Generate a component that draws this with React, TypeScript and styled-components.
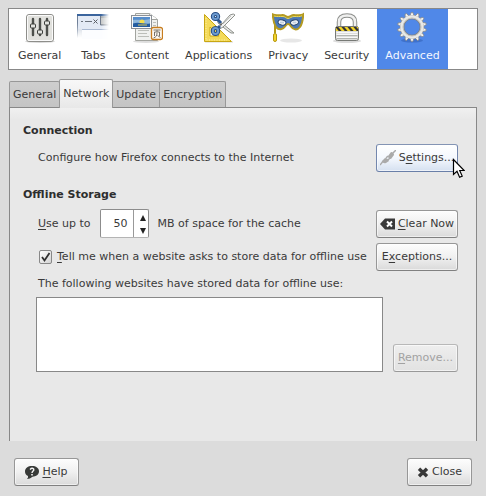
import React, { useState } from "react";
import styled, { createGlobalStyle, css } from "styled-components";

const GlobalStyle = createGlobalStyle`
  *, *::before, *::after { box-sizing: border-box; }
  html { height: 100%; }
  body {
    margin: 0;
    background: #dcdcdc;
    color: #3a3a3a;
    font: 11px/16px "DejaVu Sans", Verdana, sans-serif;
  }
  button, input, select { font: inherit; color: inherit; margin: 0; }
  svg { display: block; flex: none; }
  u { text-underline-offset: 2px; text-decoration-thickness: 1px; text-decoration-skip-ink: none; }
`;

const Dialog = styled.main`
  display: flex;
  flex-direction: column;
  min-height: 100vh;
  padding: 8px 8px 10px;
`;

const CategoryBar = styled.nav`
  display: flex;
  height: 62px;
  padding-left: 1px;
  border: 1px solid #888888;
  background: #ffffff;
`;

const Category = styled.button<{ $active: boolean }>`
  display: flex;
  flex-direction: column;
  align-items: center;
  gap: 5px;
  padding: 2px 8px 0;
  border: 0;
  background: ${(p) => (p.$active ? "#5088e8" : "transparent")};
  ${(p) => p.$active && css`color: #f4f7ff;`}
`;

const TabList = styled.div`
  display: flex;
  align-items: flex-end;
  height: 29px;
  margin: 9px 1px 0;
`;

const Tab = styled.button<{ $active: boolean }>`
  height: ${(p) => (p.$active ? 29 : 27)}px;
  padding: 0 3px;
  border: 1px solid #989898;
  border-bottom: ${(p) => (p.$active ? "0" : "1px solid #888888")};
  border-radius: 2px 2px 0 0;
  background: ${(p) => (p.$active ? "linear-gradient(#f8f8f8, #e8e8e8)" : "linear-gradient(#cecece, #c4c4c4)")};
  & + & { margin-left: -1px; }
  ${(p) => p.$active && css`
    position: relative;
    z-index: 1;
  `}
`;

const Panel = styled.section`
  flex: 1;
  display: flex;
  flex-direction: column;
  margin: -1px 1px 0;
  padding: 15px 18px 0 13px;
  border: 1px solid #888888;
  border-bottom: 0;
  background: linear-gradient(#f0f0f0, #e8e8e8 12px);
`;

const Heading = styled.h2`
  margin: 0;
  font-size: 11px;
  line-height: 16px;
  color: #2e2e2e;
  & + div { margin-top: 5px; }
  div + & { margin-top: 15px; }
`;

const Row = styled.div`
  display: flex;
  align-items: center;
  justify-content: space-between;
  min-height: 28px;
  padding-left: 15px;
`;

const StorageRows = styled.div`
  display: flex;
  flex-direction: column;
  gap: 5px;
  padding-top: 1px;
`;

const CacheField = styled.div`
  display: flex;
  align-items: center;
  gap: 9px;
`;

const SpinBox = styled.div`
  display: flex;
  width: 49px;
  height: 29px;
  border: 1px solid #8c8c8c;
  border-bottom-color: #b4b4b4;
  border-radius: 2px;
  background: #ffffff;
`;

const SpinInput = styled.input`
  flex: 1;
  min-width: 0;
  padding: 0 5px 0 0;
  border: 0;
  background: transparent;
  text-align: right;
  appearance: textfield;
  outline: 0;
  &::-webkit-inner-spin-button { appearance: none; margin: 0; }
`;

const SpinButtons = styled.div`
  display: flex;
  flex-direction: column;
  width: 15px;
  border-left: 1px solid #999999;
`;

const SpinButton = styled.button`
  flex: 1;
  display: flex;
  align-items: center;
  justify-content: center;
  padding: 2px 0 0 4px;
  border: 0;
  background: transparent;
`;

const CheckLabel = styled.label`
  display: flex;
  align-items: center;
  gap: 5px;
`;

const CheckFrame = styled.span`
  display: grid;
  margin-left: 1px;
  & > * { grid-area: 1 / 1; }
  svg { pointer-events: none; }
`;

const CheckInput = styled.input`
  appearance: none;
  width: 13px;
  height: 14px;
  border: 1px solid #888888;
  border-radius: 2px;
  background: linear-gradient(135deg, #ffffff, #d4d4d4);
  & + svg { visibility: hidden; }
  &:checked + svg { visibility: visible; }
`;

const SiteLabel = styled.label`
  display: block;
  margin-top: 5px;
  padding-left: 15px;
`;

const SiteArea = styled.div`
  display: flex;
  align-items: flex-end;
  gap: 10px;
  margin-top: 5px;
  padding-left: 13px;
`;

const SiteList = styled.select`
  flex: 1;
  min-width: 0;
  height: 75px;
  border: 1px solid #888888;
  border-radius: 0;
  background: #ffffff;
  outline: 0;
`;

const PushButton = styled.button<{ $tone?: "plain" | "hover"; $width: number }>`
  position: relative;
  display: flex;
  align-items: center;
  justify-content: center;
  gap: 3px;
  width: ${(p) => p.$width}px;
  height: 28px;
  padding: 0;
  white-space: nowrap;
  border: 1px solid #979797;
  border-bottom-color: #808080;
  border-radius: 3px;
  background: linear-gradient(#fdfdfd, #f0f0f0 50%, #dadada);
  box-shadow: inset 0 0 0 1px #ffffff90;
  ${(p) => p.$tone === "hover" && css`
    border-color: #8394b4 #7387ae #6a7fa8;
    background: linear-gradient(#ffffff, #f4f8fe 50%, #d5e0f0);
  `}
  &:disabled {
    color: #a2a2a2;
    border-color: #b8b8b8 #b0b0b0 #999999;
    background: linear-gradient(#eeeeee, #e2e2e2);
  }
`;

const Pointer = styled.svg`
  position: absolute;
  right: -8px;
  bottom: -8px;
  pointer-events: none;
`;

const Footer = styled.footer`
  display: flex;
  justify-content: space-between;
  margin-top: 17px;
  padding: 0 6px;
`;

const SlidersIcon = () => (
  <svg width="32" height="32" viewBox="0 0 32 32">
    <ellipse cx="16" cy="30.500" rx="15" ry="1.500" fill="#00000028" />
    <rect x="2.5" y="3.5" width="27" height="27" rx="2.5" fill="#e1e1dd" stroke="#8e8e8a" />
    <rect x="3.5" y="4.5" width="25" height="25" rx="1.5" fill="none" stroke="#fafafa" />
    <path d="M9 8v16M16 8v16M23 8v16" stroke="#4d4f4b" strokeWidth="2.4" strokeLinecap="round" />
    <g fill="#e2e3df" stroke="#3c3e3b">
      <rect x="6.5" y="13" width="5" height="4" rx="1" />
      <rect x="13.5" y="19" width="5" height="4" rx="1" />
      <rect x="20.5" y="10" width="5" height="4" rx="1" />
    </g>
  </svg>
);

const TabsIcon = () => (
  <svg width="32" height="32" viewBox="0 0 32 32">
    <defs>
      <linearGradient id="tabsSide" x2="1" y2="0"><stop offset=".75" stopColor="#fff" /><stop offset="1" stopColor="#fff" stopOpacity="0" /></linearGradient>
      <mask id="tabsMask"><rect width="32" height="28" y="2" fill="url(#tabsSide)" /></mask>
      <linearGradient id="tabsBody" x2="0" y2="1"><stop offset=".4" stopColor="#c3cddc" /><stop offset="1" stopColor="#d8dde4" stopOpacity="0" /></linearGradient>
      <linearGradient id="tabsEdge" x2="0" y2="1"><stop offset=".3" stopColor="#6f7f96" /><stop offset="1" stopColor="#6f7f96" stopOpacity="0" /></linearGradient>
    </defs>
    <g mask="url(#tabsMask)">
      <path d="M0 4h32v23H0z" fill="url(#tabsBody)" />
      <path d="M23 6h9v8h-9z" fill="#c5c8c8" stroke="#858b8d" />
      <path d="M1 4h22v10h9v4H1z" fill="#e3eaf5" />
      <path d="M0 5h1v22H0z" fill="url(#tabsEdge)" />
      <path d="M23.500 5v9H32" fill="none" stroke="#707b8b" />
      <path d="M0 3h32v2H0z" fill="#3a649d" />
      <path d="M5 18h27v10H5z" fill="#fcfdff" />
      <path d="M5 18.500h27" stroke="#a9b9d2" />
      <path d="M4 10.500h2M8 10.500h7" stroke="#6b727c" />
      <path d="m16.500 8.500 4 4m0-4-4 4" stroke="#5b6067" />
    </g>
  </svg>
);

const ContentIcon = () => (
  <svg width="32" height="32" viewBox="0 0 32 32">
    <ellipse cx="15" cy="30.500" rx="13" ry="1.500" fill="#00000022" />
    <path d="M4.500 2.500h14l8 6v21h-22z" fill="#f0f1ef" stroke="#a2a49f" />
    <path d="m18.500 2.500 1 6h7" fill="#fff" stroke="#a2a49f" />
    <path d="M7 19.500h11M7 22.500h9M7 25.500h11M22 11.500h3M22 14.500h3" stroke="#bcbeb9" />
    <rect x=".5" y="4.500" width="20" height="13" fill="#fafafa" stroke="#8c9197" />
    <path d="M2 6h17v6H2z" fill="#568dcb" />
    <path d="M2 9c5-1 9 1 17-1v5H2z" fill="#91b9dc" />
    <circle cx="11" cy="11" r="2.500" fill="#f6df4c" />
    <path d="M2 12.500c6-2 10 1 17 0V16H2z" fill="#245da0" />
    <path d="M7 14h9" stroke="#d8c860" />
    <rect x="20.500" y="16.500" width="11" height="12" rx="2" fill="#fffaf1" stroke="#c77d1f" strokeWidth="1.300" />
    <path d="M22.500 19h7M26 19v2M23.500 25v-4h5v4M26 22c0 3-1 4-3.500 5M26.500 24.500l3 2" stroke="#77726b" fill="none" />
  </svg>
);

const ApplicationsIcon = () => (
  <svg width="32" height="32" viewBox="0 0 32 32">
    <path d="M2 31h28" stroke="#00000028" />
    <path d="M1.500 3.500v27h27zM7 16v9h9z" fill="#f4da59" stroke="#c8a613" fillRule="evenodd" strokeLinejoin="round" />
    <path d="M3 7v22h21" fill="none" stroke="#fff2a8" strokeDasharray="1 1.500" />
    <path d="m15 10 5 3 11 9q-3 1-6-2l-10-8z" fill="#e8e9e7" stroke="#8d908b" />
    <path d="m14 17 5-4 8-9q4-2 5 0L20 16l-5 3z" fill="#f4f4f3" stroke="#8d908b" />
    <path d="m20 13 8-8" stroke="#c3c5c1" />
    <path d="m14 8 4 4m-4 6 3-3" stroke="#2d5792" strokeWidth="3" />
    <g fill="none" stroke="#244b82" strokeWidth="4"><ellipse cx="12.500" cy="5.500" rx="2.700" ry="2.500" /><ellipse cx="12.500" cy="20" rx="2.700" ry="3" /></g>
    <g fill="none" stroke="#6d9bd0" strokeWidth="2"><ellipse cx="12.500" cy="5.500" rx="2.700" ry="2.500" /><ellipse cx="12.500" cy="20" rx="2.700" ry="3" /></g>
    <circle cx="18" cy="13.500" r="1" fill="#666" />
  </svg>
);

const MaskIcon = () => (
  <svg width="32" height="32" viewBox="0 0 32 32">
    <ellipse cx="19" cy="29.500" rx="11" ry="2" fill="#00000018" />
    <path d="M3 14v8" stroke="#b59a15" strokeWidth="2" />
    <rect x="1.500" y="22.500" width="3" height="8" rx="1.500" fill="#f2d52c" stroke="#b79712" />
    <path d="M.8 3.500c3 1.500 6 .5 9 .5 3-.5 4 2 6.200 2s3.500-2.500 6.500-2c3 0 6 1 8.700-.7-.2 5-1.200 10-3.200 12.700-3 4-7 2.500-9-.5-1-2-2-2.500-3-2.500s-2 1-3 2.500c-2 3-6 4-9 .5C2 13 1 8 .8 3.500z" fill="#4c79b6" stroke="#b49a21" strokeWidth="2" />
    <path d="M2 5c3 1 6 .3 9 .5 2 0 3 2 5 2s3.500-2 6-2c3 0 6 .5 8-.7" fill="none" stroke="#efd94e" />
    <g fill="#fff" stroke="#29466f"><ellipse cx="10" cy="11.500" rx="4" ry="2.500" transform="rotate(12 10 11.500)" /><ellipse cx="22.500" cy="11.500" rx="4" ry="2.500" transform="rotate(-12 22.500 11.500)" /></g>
    <path d="M8 11.500h4m8.500 0h4" stroke="#c1cfdf" strokeWidth="2" />
  </svg>
);

const PadlockIcon = () => (
  <svg width="32" height="32" viewBox="0 0 32 32">
    <defs><clipPath id="lockBand"><path d="M5 16h22v4H5z" /></clipPath></defs>
    <ellipse cx="16" cy="30" rx="14" ry="2" fill="#00000024" />
    <path d="M8 17V11C8 6 11 4.500 16 4.500S24 6 24 11v6" fill="none" stroke="#8c8e8b" strokeWidth="4.500" />
    <path d="M8 17V11C8 6 11 4.500 16 4.500S24 6 24 11v6" fill="none" stroke="#f0f0ef" strokeWidth="2.500" />
    <rect x="4.500" y="15.500" width="23" height="14" rx="2" fill="#dededc" stroke="#777975" />
    <path d="M5.500 21.500h21M5.500 23.500h21M5.500 26.500h21" stroke="#f8f8f8" />
    <path d="M5.500 24.500h21M5.500 27.500h21" stroke="#b2b4b0" />
    <g clipPath="url(#lockBand)"><path d="M5 16h22v4H5z" fill="#f2d326" /><path d="m5 15 5 6m1-6 5 6m1-6 5 6m1-6 5 6" stroke="#343434" strokeWidth="2.200" /></g>
  </svg>
);

const TEETH = Array.from({ length: 14 }, (_, i) => (i * 360) / 14);

const GearIcon = () => (
  <svg width="32" height="32" viewBox="0 0 32 32">
    <ellipse cx="16" cy="29.500" rx="11" ry="2" fill="#1a3f8c50" />
    {TEETH.map((a) => (
      <path key={a} d="m13.500 6 1.700-4.500h1.600L18.500 6z" fill="#f4f4f2" stroke="#85878a" strokeWidth=".8" transform={`rotate(${a} 16 16)`} />
    ))}
    <circle cx="16" cy="16" r="9.700" fill="none" stroke="#7f8287" strokeWidth="4" />
    <circle cx="16" cy="16" r="10.200" fill="none" stroke="#e9e9e6" strokeWidth="3" />
    <circle cx="16" cy="16" r="9" fill="none" stroke="#bfc0bd" />
  </svg>
);

const PlugIcon = () => (
  <svg width="16" height="16" viewBox="0 0 16 16" fill="#aaaaaa">
    <path d="M0 15q2-2 3-4" stroke="#aaaaaa" strokeWidth="1.500" fill="none" />
    <path d="m2 11 3-3q3 0 4 3l-3 2q-3 1-4-2z" />
    <path d="m8 6 3-4q3 0 3 3l-3 4q-3 0-3-3z" />
    <path d="m6 8 2-2m0 4 2-2m3-5 3-3" stroke="#aaaaaa" strokeWidth="1.500" />
  </svg>
);

const EraseIcon = () => (
  <svg width="15" height="12" viewBox="0 0 15 12">
    <path d="M0 6 5 .5h10v11H5z" fill="#393939" />
    <path d="m7 3.500 5 5m0-5-5 5" stroke="#ffffff" strokeWidth="2" />
  </svg>
);

const HelpIcon = () => (
  <svg width="14" height="13" viewBox="0 0 14 13">
    <path d="M7 0c4 0 7 2 7 5.300s-3 5.400-6.500 5.400Q5 13 2 13q1.500-1.500 1-3Q0 8.500 0 5.500C0 2 3 0 7 0z" fill="#383a38" />
    <path d="M5 3.500Q7 1.500 8.700 3c1 1.700-1.700 2-1.700 4" fill="none" stroke="#f5f5f5" strokeWidth="1.400" />
    <path d="M6.200 8h1.600v1.500H6.200z" fill="#f5f5f5" />
  </svg>
);

const CloseIcon = () => (
  <svg width="12" height="11" viewBox="0 0 12 11">
    <path d="m2 1.700 8 7.600m0-7.600L2 9.300" stroke="#383838" strokeWidth="3.400" />
  </svg>
);

const CATEGORIES = [
  { name: "General", Icon: SlidersIcon },
  { name: "Tabs", Icon: TabsIcon },
  { name: "Content", Icon: ContentIcon },
  { name: "Applications", Icon: ApplicationsIcon },
  { name: "Privacy", Icon: MaskIcon },
  { name: "Security", Icon: PadlockIcon },
  { name: "Advanced", Icon: GearIcon },
];

const TABS = ["General", "Network", "Update", "Encryption"];

export default function App() {
  const [category, setCategory] = useState("Advanced");
  const [tab, setTab] = useState("Network");
  const [cache, setCache] = useState(50);
  const [notify, setNotify] = useState(true);

  return (
    <>
      <GlobalStyle />
      <Dialog>
        <CategoryBar aria-label="Categories">
          {CATEGORIES.map(({ name, Icon }) => (
            <Category key={name} type="button" $active={category === name} aria-pressed={category === name} onClick={() => setCategory(name)}>
              <Icon />
              <span>{name}</span>
            </Category>
          ))}
        </CategoryBar>
        <TabList role="tablist">
          {TABS.map((name) => (
            <Tab key={name} type="button" role="tab" $active={tab === name} aria-selected={tab === name} onClick={() => setTab(name)}>
              {name}
            </Tab>
          ))}
        </TabList>
        <Panel role="tabpanel">
          <Heading>Connection</Heading>
          <Row>
            <span>Configure how Firefox connects to the Internet</span>
            <PushButton type="button" $tone="hover" $width={82}>
              <PlugIcon />
              <span>S<u>e</u>ttings...</span>
              <Pointer width="13" height="21" viewBox="0 0 13 21">
                <path d="M1.500 1.500v15l3.500-3.200 2.600 6 2.600-1.200-2.500-5.600h4.500z" fill="#ffffff" stroke="#000000" strokeWidth="1.200" />
              </Pointer>
            </PushButton>
          </Row>
          <Heading>Offline Storage</Heading>
          <StorageRows>
            <Row>
              <CacheField>
                <label htmlFor="cache"><u>U</u>se up to</label>
                <SpinBox>
                  <SpinInput id="cache" type="number" value={cache} onChange={(e) => setCache(Number(e.target.value))} />
                  <SpinButtons>
                    <SpinButton type="button" aria-label="Increase" onClick={() => setCache(cache + 1)}>
                      <svg width="6" height="6" viewBox="0 0 6 6"><path d="M3 0 6 6H0z" fill="#222222" /></svg>
                    </SpinButton>
                    <SpinButton type="button" aria-label="Decrease" onClick={() => setCache(Math.max(0, cache - 1))}>
                      <svg width="6" height="6" viewBox="0 0 6 6"><path d="M3 6 6 0H0z" fill="#222222" /></svg>
                    </SpinButton>
                  </SpinButtons>
                </SpinBox>
                <span>MB of space for the cache</span>
              </CacheField>
              <PushButton type="button" $width={82}>
                <EraseIcon />
                <span><u>C</u>lear Now</span>
              </PushButton>
            </Row>
            <Row>
              <CheckLabel>
                <CheckFrame>
                  <CheckInput type="checkbox" checked={notify} onChange={(e) => setNotify(e.target.checked)} />
                  <svg width="13" height="14" viewBox="0 0 13 14"><path d="m3 7 2.500 3.500L10.500 3" fill="none" stroke="#303030" strokeWidth="1.800" /></svg>
                </CheckFrame>
                <span><u>T</u>ell me when a website asks to store data for offline use</span>
              </CheckLabel>
              <PushButton type="button" $width={82}><span>E<u>x</u>ceptions...</span></PushButton>
            </Row>
          </StorageRows>
          <SiteLabel htmlFor="sites">The following websites have stored data for offline use:</SiteLabel>
          <SiteArea>
            <SiteList id="sites" multiple />
            <PushButton type="button" disabled $width={65}><span><u>R</u>emove...</span></PushButton>
          </SiteArea>
        </Panel>
        <Footer>
          <PushButton type="button" $width={65}><HelpIcon /><span><u>H</u>elp</span></PushButton>
          <PushButton type="button" $width={65}><CloseIcon /><span>Close</span></PushButton>
        </Footer>
      </Dialog>
    </>
  );
}
